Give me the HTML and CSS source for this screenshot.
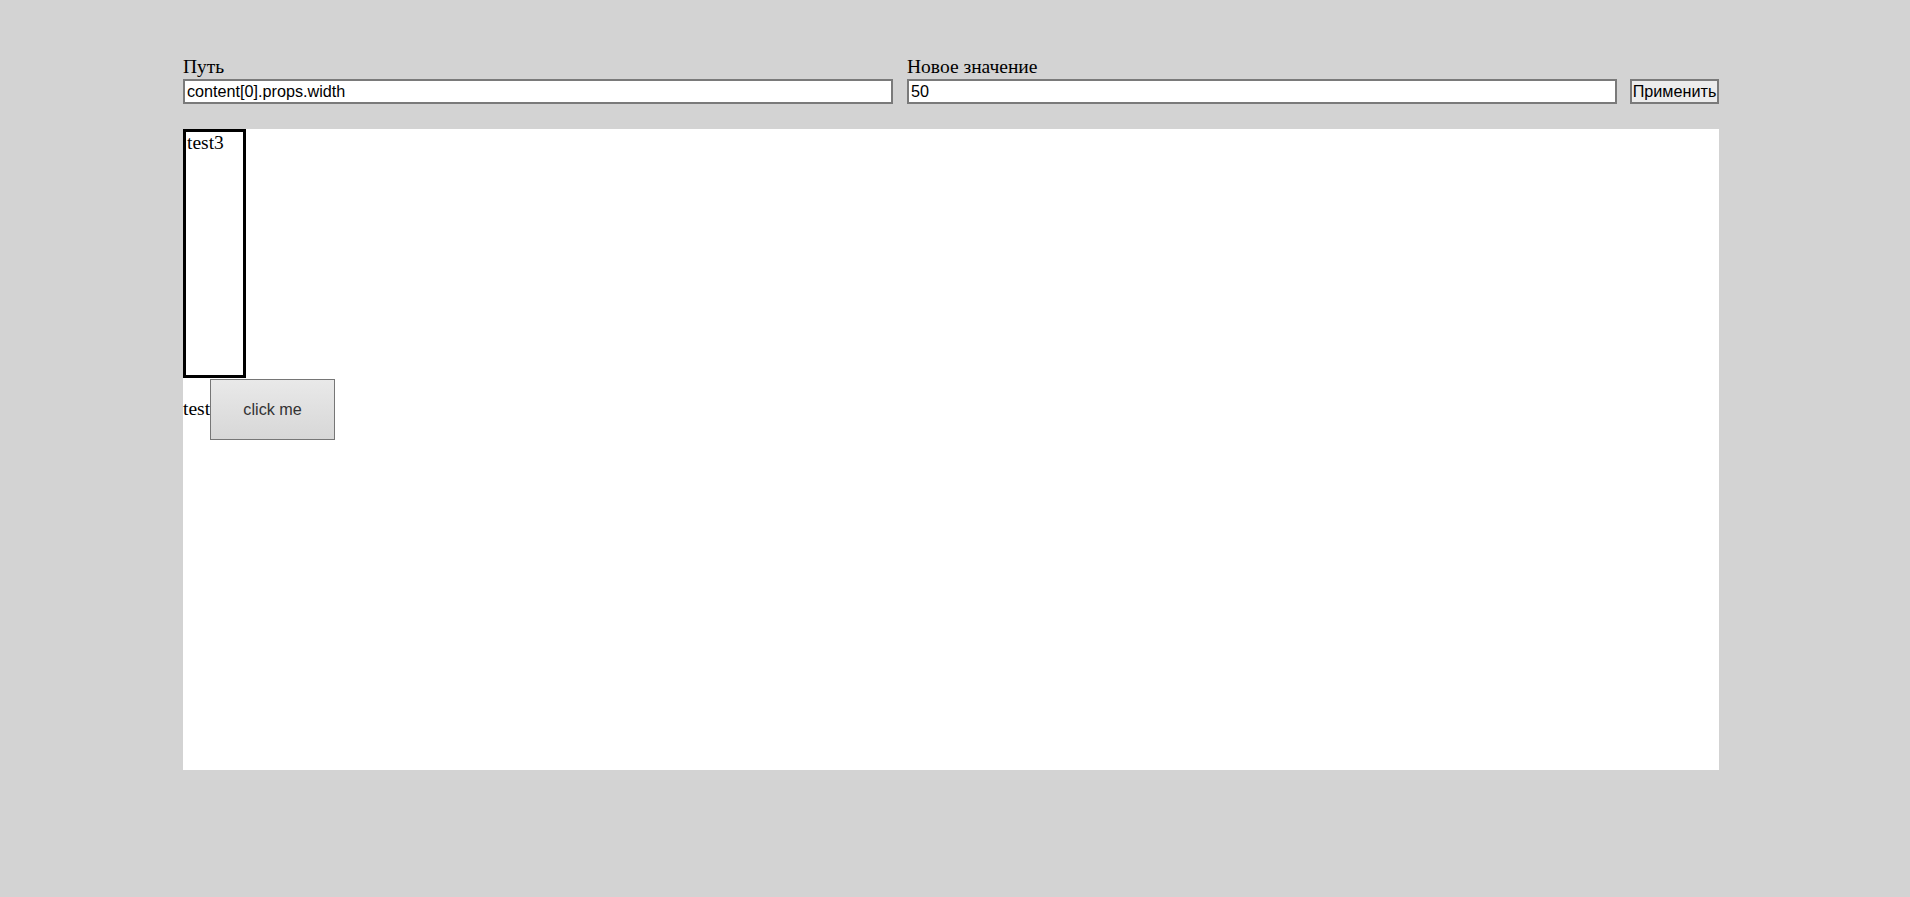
FILE: index.html
```html
<!DOCTYPE html>
<html lang="ru">
<head>
<meta charset="utf-8">
<title>Editor</title>
<link rel="stylesheet" href="styles.css">
</head>
<body>
<div class="app">
  <div class="toolbar">
    <div class="field">
      <label class="label" for="path">Путь</label>
      <input class="input" id="path" type="text" value="content[0].props.width">
    </div>
    <div class="field">
      <label class="label" for="val">Новое значение</label>
      <input class="input" id="val" type="text" value="50">
    </div>
    <button class="apply" type="button">Применить</button>
  </div>
  <div class="canvas">
    <div class="box">test3</div>
    <div class="row">
      <span class="text">test</span>
      <button class="click" type="button">click me</button>
    </div>
  </div>
</div>
</body>
</html>
```
FILE: styles.css
```css
html {
  background: #d3d3d3;
}
body {
  margin: 0;
  background: #d3d3d3;
  font-family: "Liberation Serif", "Times New Roman", serif;
  font-size: 19.5px;
  color: #000;
}
.app {
  width: 1536px;
  margin-left: 183px;
  padding-top: 56px;
}
.toolbar {
  display: flex;
  align-items: flex-end;
}
.field {
  width: 710px;
  display: flex;
  flex-direction: column;
}
.field + .field {
  margin-left: 14px;
}
.label {
  display: block;
  line-height: 22px;
  height: 22px;
  margin-bottom: 1px;
}
.input {
  box-sizing: border-box;
  width: 710px;
  height: 25px;
  margin: 0;
  padding: 0 2px;
  border: 2px solid #7a7a7a;
  background: #fff;
  font-family: "Liberation Sans", Arial, sans-serif;
  font-size: 16.2px;
  color: #000;
  outline: none;
}
.apply {
  box-sizing: border-box;
  margin-left: 13px;
  width: 89px;
  height: 25px;
  padding: 0;
  border: 2px solid #7a7a7a;
  background: #ececec;
  font-family: "Liberation Sans", Arial, sans-serif;
  font-size: 16.2px;
  color: #000;
}
.canvas {
  margin-top: 25px;
  height: 641px;
  background: #fff;
}
.box {
  box-sizing: border-box;
  width: 63px;
  height: 249px;
  border: 3px solid #000;
  padding-left: 1px;
  line-height: 22px;
}
.row {
  display: flex;
  align-items: baseline;
}
.text {
  line-height: 22px;
}
.click {
  box-sizing: border-box;
  width: 125px;
  height: 61px;
  margin-top: 1px;
  padding: 0;
  border: 1px solid #767676;
  background: linear-gradient(#e9e9e9, #d7d7d7);
  font-family: "Liberation Sans", Arial, sans-serif;
  font-size: 16.2px;
  color: #333;
}
```
